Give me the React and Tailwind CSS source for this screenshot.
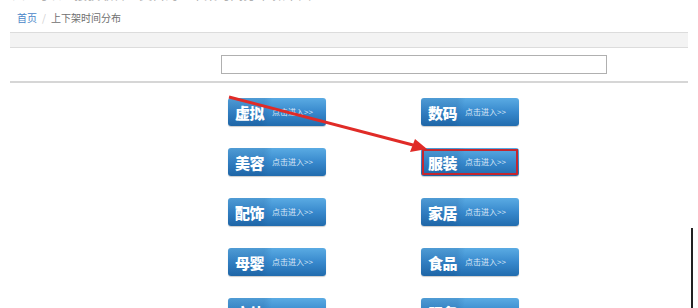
const categories = [
  ["虚拟", "数码"],
  ["美容", "服装"],
  ["配饰", "家居"],
  ["母婴", "食品"],
  ["文体", "服务"],
];

const CategoryButton = ({ name, highlight }) => (
  <a
    href="#"
    className="relative flex h-[28px] w-[98px] items-center overflow-hidden rounded-[3px] bg-gradient-to-b from-[#5aabe3] via-[#3889cd] to-[#216cae] pl-[7px] text-white shadow-[0_1px_1px_rgba(0,0,0,0.2)]"
  >
    <span className="absolute inset-y-0 left-0 w-[46px] bg-[linear-gradient(100deg,rgba(10,60,120,0.14)_0%,rgba(10,60,120,0.14)_72%,transparent_88%)]" />
    <span className="relative text-[15px] font-black leading-none tracking-[-0.5px]">
      {name}
    </span>
    <span className="relative ml-[8px] text-[8px] leading-none text-[#dbe9f6]">
      点击进入&gt;&gt;
    </span>
    {highlight && (
      <span className="absolute inset-[1px] border-2 border-[#c4262e]" />
    )}
  </a>
);

export default function App() {
  return (
    <div className="relative h-[308px] w-[698px] overflow-hidden bg-white font-['Noto_Sans_CJK_SC','Noto_Sans',sans-serif]">
      {/* cut-off line of text from the page above */}
      <div className="h-[5px] overflow-hidden">
        <p className="-mt-[14px] pl-[2px] text-[13px] leading-[16px] text-[#b0b0b0]">
          （3）可以直接获取各个类目的上下架时间分布 如下图
        </p>
      </div>

      <div className="flex items-center gap-[5px] pl-[17px] pt-[6px] text-[10px] leading-[14px]">
        <span className="text-[#4a86c8]">首页</span>
        <span className="text-[#cfcfcf]">/</span>
        <span className="text-[#707070]">上下架时间分布</span>
      </div>

      <div className="mx-[10px] mt-[7px] h-[16px] border-y border-[#dcdcdc] bg-[#f3f3f3]" />

      <div className="pl-[221px] pt-[7px]">
        <div className="h-[19px] w-[386px] border border-[#b0b0b0] bg-white" />
      </div>

      <div className="mx-[10px] mt-[7px] h-[2px] bg-[#d6d6d6]" />

      <div className="grid grid-cols-[98px_98px] gap-x-[95px] gap-y-[22px] pl-[228px] pt-[15px]">
        {categories.map(([left, right]) => (
          <div key={left} className="contents">
            <CategoryButton name={left} />
            <CategoryButton name={right} highlight={right === "服装"} />
          </div>
        ))}
      </div>

      {/* annotation arrow */}
      <svg
        className="pointer-events-none absolute left-0 top-0"
        width="698"
        height="308"
      >
        <line
          x1="229"
          y1="97"
          x2="413"
          y2="145"
          stroke="#e02b27"
          strokeWidth="3"
        />
        <polygon points="427,149 410,152 415,139" fill="#e02b27" />
      </svg>

      <div className="absolute left-[691px] top-[228px] h-[80px] w-[2px] bg-[#222]" />
    </div>
  );
}
